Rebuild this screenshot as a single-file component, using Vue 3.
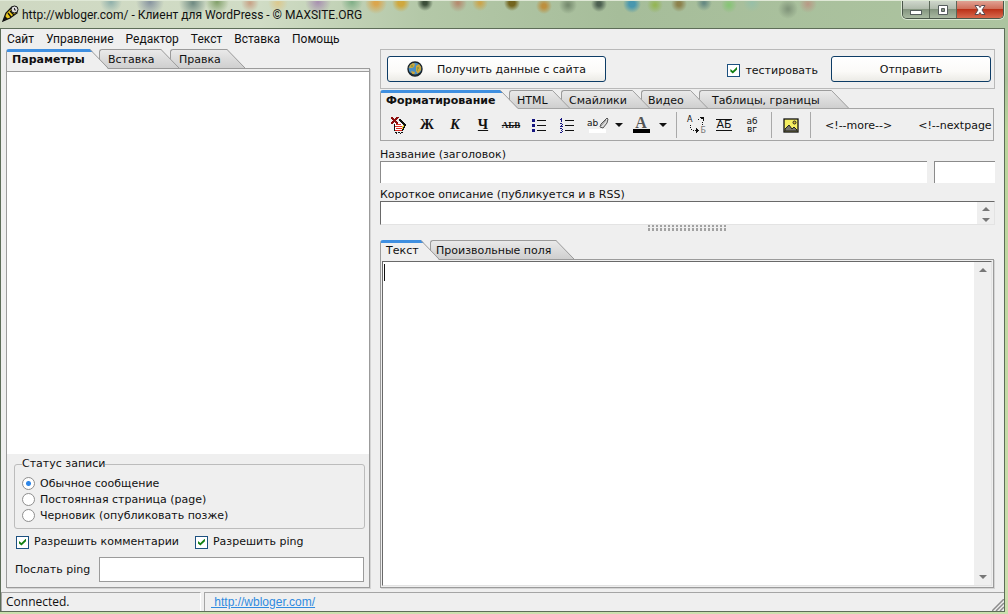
<script setup>
import { ref } from 'vue'

const menu = ['Сайт', 'Управление', 'Редактор', 'Текст', 'Вставка', 'Помощь']

const tabGroups = {
  left: [
    { label: 'Параметры', width: 102, bold: true },
    { label: 'Вставка', width: 80, pad: 9 },
    { label: 'Правка', width: 75, pad: 9 },
  ],
  format: [
    { label: 'Форматирование', width: 138, bold: true },
    { label: 'HTML', width: 61, pad: 8 },
    { label: 'Смайлики', width: 89, pad: 8 },
    { label: 'Видео', width: 67, pad: 7 },
    { label: 'Таблицы, границы', width: 150, pad: 13 },
  ],
  text: [
    { label: 'Текст', width: 59 },
    { label: 'Произвольные поля', width: 144, pad: 6 },
  ],
}

const tabStyle = (tab, i) => ({
  width: tab.width + 'px',
  paddingLeft: (tab.pad || 6) + 'px',
  zIndex: 10 - i,
})

const status = ref('post')
const statuses = [
  { value: 'post', label: 'Обычное сообщение' },
  { value: 'page', label: 'Постоянная страница (page)' },
  { value: 'draft', label: 'Черновик (опубликовать позже)' },
]
const allowComments = ref(true)
const allowPing = ref(true)
const testing = ref(true)
const pingUrl = ref('')
const title = ref('')
const slug = ref('')
const excerpt = ref('')
const body = ref('')
</script>

<template>
  <div class="window">
    <header class="titlebar">
      <svg class="app-icon" width="17" height="17" viewBox="0 0 17 17">
        <path d="M1 16 L4 8 L10 2 L15 8 L8 13 Z" fill="#e8c81c" stroke="#111" stroke-width="1.3" />
        <path d="M6 8 L9 12 M8 6 L12 10" stroke="#111" stroke-width="1.3" />
        <path d="M1 16 L3 11 L6 14 Z" fill="#111" />
        <circle cx="12.5" cy="4.5" r="3.5" fill="#ddd" stroke="#111" />
        <path d="M12.5 3v2h1.5" fill="none" stroke="#333" />
      </svg>
      <h1>http://wbloger.com/ - Клиент для WordPress - © MAXSITE.ORG</h1>
      <div class="window-buttons">
        <button type="button" class="min" aria-label="Свернуть">
          <svg width="14" height="14" viewBox="0 0 14 14"><rect x="1.5" y="7.5" width="11" height="4" fill="#fff" stroke="#555d5d" /></svg>
        </button>
        <button type="button" class="max" aria-label="Развернуть">
          <svg width="14" height="14" viewBox="0 0 14 14"><path fill-rule="evenodd" d="M2.5 2.5h9v9h-9z M5.5 5.5v3h3v-3z" fill="#fff" stroke="#555d5d" /></svg>
        </button>
        <button type="button" class="close" aria-label="Закрыть">
          <svg width="14" height="14" viewBox="0 0 14 14"><path d="M2 2.5h3.500l1.500 2 1.500-2H12L9 7l3 4.500H8.500L7 9.500l-1.500 2H2L5 7z" fill="#fff" stroke="#5a4a50" /></svg>
        </button>
      </div>
    </header>

    <div class="client">
      <nav class="menu">
        <button v-for="item in menu" :key="item" type="button">{{ item }}</button>
      </nav>

      <main class="workspace">
        <aside class="sidebar">
          <div class="tabs" role="tablist">
            <button v-for="(tab, i) in tabGroups.left" :key="tab.label" type="button" role="tab" class="tab" :class="{ active: i === 0, bold: tab.bold }" :aria-selected="i === 0" :style="tabStyle(tab, i)">
              <svg class="slant" width="18" height="19" viewBox="0 0 18 19"><path d="M0 0.500 L18 19" /></svg>
              <span>{{ tab.label }}</span>
            </button>
          </div>
          <div class="side-panel">
            <div class="parameters"></div>
            <div class="options">
              <fieldset>
                <legend>Статус записи</legend>
                <label v-for="s in statuses" :key="s.value">
                  <input v-model="status" type="radio" name="status" :value="s.value" /><span>{{ s.label }}</span>
                </label>
              </fieldset>
              <div class="checks">
                <label><input v-model="allowComments" type="checkbox" />Разрешить комментарии</label>
                <label><input v-model="allowPing" type="checkbox" />Разрешить ping</label>
              </div>
              <div class="ping">
                <label for="ping">Послать ping</label>
                <input id="ping" v-model="pingUrl" type="text" />
              </div>
            </div>
          </div>
        </aside>

        <section class="editor">
          <div class="actions">
            <button type="button" class="push fetch">
              <svg width="16" height="16" viewBox="0 0 16 16">
                <circle cx="8" cy="8" r="7" fill="#4b8fc4" stroke="#1a2126" stroke-width="1.4" />
                <path d="M3 4 L6 2 L8 3 L7 6 L5 7 L2 7z M9 5 L12 3 L14 6 L14 9 L11 13 L9 10z M4 10 L8 11 L7 14 L5 13z" fill="#cfa73a" />
                <path d="M3 12 A6.500 6.500 0 0 0 13 12" fill="none" stroke="#1d2c33" stroke-width="1.5" />
                <path d="M4 5h2M10 7h2M10 9h1" stroke="#5c8b3c" />
              </svg>
              <span>Получить данные с сайта</span>
            </button>
            <label class="testing"><input v-model="testing" type="checkbox" /><span>тестировать</span></label>
            <button type="button" class="push send">Отправить</button>
          </div>

          <div class="tabs format-tabs" role="tablist">
            <button v-for="(tab, i) in tabGroups.format" :key="tab.label" type="button" role="tab" class="tab" :class="{ active: i === 0, bold: tab.bold }" :aria-selected="i === 0" :style="tabStyle(tab, i)">
              <svg class="slant" width="18" height="19" viewBox="0 0 18 19"><path d="M0 0.500 L18 19" /></svg>
              <span>{{ tab.label }}</span>
            </button>
          </div>
          <div class="toolbar" role="toolbar">
            <button type="button" class="tool" aria-label="Очистить">
              <svg width="18" height="18" viewBox="0 0 18 18" shape-rendering="crispEdges">
                <path d="M5 7h7v2h2v3h-1v3H5z" fill="#fff" />
                <path d="M9 3h2v1h1v1h1v1h1v1h1v1h1v2h-1v2h-1v2h-1v1h-1v-2h1v-2h1V9h-1V8h-1V7h-1V6h-1V5H9z" fill="#111" />
                <path d="M13 9h1v2h-1v2h-1v-3h1z" fill="#ead43a" />
                <path d="M6 8h5v1H6zM5 10h7v1H5zM6 12h6v1H6zM5 14h7v1H5z" fill="#dc2c22" />
                <path d="M4 8h1v7H4zM5 16h2v1H5zM8 16h2v1H8zM11 16h2v1h-2zM6 17h1v1H6zM10 17h1v1h-1z" fill="#111" />
                <path d="M1 1h2v1h1v1h1V2h1V1h3v1H8v1H7v1H6v1h1v1h1v2H6V7H5V6H4v1H3v1H1V6h1V5h1V4H2V3H1z" fill="#8e1010" />
              </svg>
            </button>
            <button type="button" class="tool serif">Ж</button>
            <button type="button" class="tool serif italic">К</button>
            <button type="button" class="tool serif under">Ч</button>
            <button type="button" class="tool serif strike">АБВ</button>
            <button type="button" class="tool" aria-label="Маркированный список">
              <svg width="16" height="16" viewBox="0 0 16 16" shape-rendering="crispEdges">
                <path d="M1 2h3v3H1zM1 7h3v3H1zM1 12h3v3H1z" fill="#15157f" /><path d="M6 3h9v1H6zM6 8h9v1H6zM6 13h9v1H6z" fill="#111" />
              </svg>
            </button>
            <button type="button" class="tool" aria-label="Нумерованный список">
              <svg width="16" height="16" viewBox="0 0 16 16" shape-rendering="crispEdges">
                <path d="M2 1h1v4H2zM1 2h1v1H1zM1 6h2v1H1zM3 7h1v1H3zM2 8h1v1H2zM1 9h3v1H1zM1 11h2v1H1zM3 12h1v1H3zM2 13h1v1H2zM3 14h1v1H3zM1 15h2v1H1z" fill="#15157f" /><path d="M6 3h9v1H6zM6 8h9v1H6zM6 13h9v1H6z" fill="#111" />
              </svg>
            </button>
            <button type="button" class="tool highlight" aria-label="Цвет фона">
              <span>ab</span>
              <svg width="10" height="12" viewBox="0 0 10 12"><path d="M8 1l1 1-1 4-4 5-3-1 1-3z" fill="#ddd" stroke="#555" /><path d="M1 10l6-7" stroke="#888" /></svg>
              <i></i>
            </button>
            <button type="button" class="drop" aria-label="Выбрать цвет фона"></button>
            <button type="button" class="tool color"><span>A</span></button>
            <button type="button" class="drop" aria-label="Выбрать цвет текста"></button>
            <span class="separator"></span>
            <button type="button" class="tool swap" aria-label="Заменить">
              <svg width="18" height="18" viewBox="0 0 18 18" shape-rendering="crispEdges">
                <path d="M3 9h1v1H3zM3 11h1v1H3zM4 13h1v1H4zM6 14h1v1H6zM8 14h1v1H8zM9 12h1v5H9zM10 13h1v3h-1zM11 14h1v1h-1zM11 3h1v1h-1zM13 1h4v1h-4zM14 2h3v1h-3zM16 3h1v2h-1zM15 6h1v1h-1zM15 8h1v1h-1z" fill="#111" />
              </svg>
              <b>А</b><em>Б</em>
            </button>
            <button type="button" class="tool lines">АБ</button>
            <button type="button" class="tool stack">аб<br />вг</button>
            <span class="separator"></span>
            <button type="button" class="tool" aria-label="Изображение">
              <svg width="16" height="16" viewBox="0 0 16 16">
                <rect x="1" y="2" width="14" height="13" fill="#f5ef62" stroke="#111" stroke-width="1.3" />
                <circle cx="11.5" cy="5.5" r="1.5" fill="#d6b72a" stroke="#222" />
                <path d="M2 14v-2l4-4 3 4 2-2 3 3v1z" fill="#77756b" stroke="#222" />
              </svg>
            </button>
            <span class="separator"></span>
            <button type="button" class="tag">&lt;!--more--&gt;</button>
            <button type="button" class="tag">&lt;!--nextpage</button>
          </div>

          <label class="caption first" for="post-title">Название (заголовок)</label>
          <div class="title-row">
            <input id="post-title" v-model="title" type="text" class="sunken" />
            <input v-model="slug" type="text" class="sunken slug" aria-label="Ярлык" />
          </div>
          <label class="caption" for="excerpt">Короткое описание (публикуется и в RSS)</label>
          <div class="area excerpt">
            <textarea id="excerpt" v-model="excerpt"></textarea>
            <div class="scroll"><i class="up"></i><i class="down"></i></div>
          </div>
          <div class="grip"></div>

          <div class="tabs" role="tablist">
            <button v-for="(tab, i) in tabGroups.text" :key="tab.label" type="button" role="tab" class="tab" :class="{ active: i === 0 }" :aria-selected="i === 0" :style="tabStyle(tab, i)">
              <svg class="slant" width="18" height="19" viewBox="0 0 18 19"><path d="M0 0.500 L18 19" /></svg>
              <span>{{ tab.label }}</span>
            </button>
          </div>
          <div class="text-panel">
            <div class="area">
              <textarea v-model="body" aria-label="Текст записи"></textarea>
              <span class="caret"></span>
              <div class="scroll"><i class="up"></i><i class="down"></i></div>
            </div>
          </div>
        </section>
      </main>

      <footer class="statusbar">
        <div class="state">Connected.</div>
        <div class="site"><a href="http://wbloger.com/">&nbsp;http://wbloger.com/</a></div>
        <svg class="resize" width="12" height="12" viewBox="0 0 12 12"><path d="M0 12L12 0M4 12l8-8M8 12l4-4" stroke="#8d8d8d" stroke-width="1.5" /></svg>
      </footer>
    </div>
  </div>
</template>

<style>
body {
  margin: 0;
}
</style>

<style scoped>
* {
  box-sizing: border-box;
}
.window {
  display: flex;
  flex-direction: column;
  min-height: 100vh;
  padding: 0 3px 2px 0;
  background: linear-gradient(#b5c6a8 0, #a9c39a 80px, #b9d59b 130px, #cbe0ae 100%);
  font: 11px/16px "DejaVu Sans", sans-serif;
  color: #111;
}
button,
input,
textarea {
  font: inherit;
  color: inherit;
  margin: 0;
  padding: 0;
}
button {
  border: 0;
  background: none;
}
.titlebar {
  display: flex;
  align-items: center;
  height: 28px;
  margin-right: -3px;
  padding: 0 4px 0 2px;
  border-top: 1px solid #dfe8d6;
  background:
    radial-gradient(circle at 111px 1px, #8fb0ab 0, transparent 11px),
    radial-gradient(circle at 150px 1px, #8794a0 0, transparent 14px),
    radial-gradient(circle at 193px 2px, #6f8a82 0, transparent 14px),
    radial-gradient(circle at 217px 1px, #82a06a 0, transparent 12px),
    radial-gradient(circle at 250px 2px, #c8a084 0, transparent 9px),
    radial-gradient(circle at 278px 2px, #dcc88c 0, transparent 10px),
    radial-gradient(circle at 318px 1px, #a78fb0 0, transparent 13px),
    radial-gradient(circle at 352px 1px, #7fae86 0, transparent 11px),
    radial-gradient(circle at 376px 2px, #dba64e 2px, transparent 11px),
    radial-gradient(circle at 401px 2px, #cfa83e 3px, transparent 9px),
    radial-gradient(circle at 425px 2px, #3d4f3a 2px, transparent 8px),
    radial-gradient(circle at 458px 2px, #b58c70 1px, transparent 9px),
    radial-gradient(circle at 480px 2px, #cba54c 1px, transparent 8px),
    radial-gradient(circle at 512px 2px, #73651f 3px, transparent 8px),
    radial-gradient(circle at 544px 5px, #bd8f3e 2px, transparent 8px),
    radial-gradient(circle at 568px 4px, #788c70 1px, transparent 9px),
    radial-gradient(circle at 599px 3px, #4d6051 2px, transparent 8px),
    radial-gradient(circle at 632px 3px, #4997ae 3px, transparent 9px),
    radial-gradient(circle at 655px 4px, #95b657 1px, transparent 8px),
    radial-gradient(circle at 679px 3px, #8d824d 2px, transparent 8px),
    radial-gradient(circle at 704px 2px, #688b83 1px, transparent 8px),
    radial-gradient(circle at 729px 4px, #88c477 1px, transparent 8px),
    radial-gradient(circle at 752px 2px, #97bfa8 0, transparent 9px),
    radial-gradient(circle at 788px 8px, #83977c 1px, transparent 10px),
    radial-gradient(circle at 808px 3px, #b99884 0, transparent 9px),
    linear-gradient(90deg, #cfd8c2 0, #d0dcc5 260px, #b4c8a8 420px, #a6bd9a 620px, #adc4a0 100%);
}
.app-icon {
  flex: none;
  margin-top: -2px;
}
h1 {
  flex: 1;
  margin: 0 0 0 3px;
  font: 12px/16px Roboto, "Noto Sans", sans-serif;
}
.window-buttons {
  display: flex;
  align-self: flex-start;
  height: 18px;
  border: 1px solid #4a574a;
  border-top: 0;
  border-radius: 0 0 5px 5px;
  overflow: hidden;
  box-shadow: 0 0 0 1px #dce8d4;
}
.window-buttons button {
  display: grid;
  place-items: center;
  width: 27px;
  border-right: 1px solid #5b6859;
  background: linear-gradient(#ced6cb 0, #b1bcad 45%, #84957f 50%, #a9b9a1 100%);
}
.window-buttons .close {
  width: 46px;
  border-right: 0;
  background: linear-gradient(#e0a193 0, #d0705b 45%, #bb3219 50%, #d8694e 100%);
}
.client {
  display: flex;
  flex: 1;
  flex-direction: column;
  border: 1px solid #5d6d58;
  background: #efefef;
}
.menu {
  display: flex;
  gap: 12px;
  height: 20px;
  padding-left: 6px;
}
.menu button {
  font: 12px/20px Roboto, "Noto Sans", sans-serif;
}
.workspace {
  display: flex;
  flex: 1;
  gap: 10px;
  padding: 0 9px 4px 5px;
}
.sidebar {
  display: flex;
  flex: 0 0 364px;
  flex-direction: column;
}
.editor {
  display: flex;
  flex: 1;
  flex-direction: column;
  min-width: 0;
}
.tabs {
  position: relative;
  z-index: 1;
  display: flex;
  height: 19px;
}
.tab {
  position: relative;
  flex: none;
  margin-right: -9px;
  text-align: left;
  white-space: nowrap;
  line-height: 20px;
}
.tab::before {
  content: "";
  position: absolute;
  inset: 0;
  border: 1px solid #9b9b9b;
  border-width: 1px 0 0 1px;
  border-radius: 3px 0 0 0;
  background: linear-gradient(#e9e9e9, #cfcfcf);
  clip-path: polygon(0 0, calc(100% - 18px) 0, 100% 100%, 0 100%);
}
.slant {
  position: absolute;
  top: 0;
  right: 0;
  height: 100%;
}
.slant path {
  stroke: #9b9b9b;
}
.tab span {
  position: relative;
  top: 1px;
}
.tab.bold {
  font-weight: bold;
}
.tab.active::before {
  bottom: -1px;
  border-top: 3px solid #3f8fe0;
  background: #efefef;
}
.side-panel {
  display: flex;
  flex: 1;
  flex-direction: column;
  border: 1px solid #9b9b9b;
  box-shadow: 1px 1px 0 #d4d4d4;
}
.parameters {
  flex: 1;
  margin-top: 2px;
  border-top: 1px solid #9b9b9b;
  background: #fff;
}
.options {
  padding: 3px 4px 5px 7px;
}
fieldset {
  display: flex;
  flex-direction: column;
  margin: 0;
  padding: 4px 7px 5px;
  border: 1px solid #bcbcbc;
  border-radius: 3px;
}
legend {
  height: 14px;
  padding: 0;
  line-height: 14px;
}
label {
  white-space: nowrap;
}
fieldset label,
.checks label,
.testing {
  display: flex;
  align-items: center;
  gap: 5px;
  height: 16px;
}
fieldset label span,
.testing span {
  padding-top: 2px;
}
input[type="radio"] {
  appearance: none;
  width: 13px;
  height: 13px;
  border: 1px solid #8e8e8e;
  border-radius: 50%;
  background: #fff;
}
input[type="radio"]:checked {
  background: radial-gradient(circle, #2d86e8 0, #2d86e8 2px, #fff 3px);
}
input[type="checkbox"] {
  appearance: none;
  display: grid;
  place-items: center;
  width: 13px;
  height: 13px;
  border: 1px solid #1c5180;
  background: #fff;
}
input[type="checkbox"]:checked::after {
  content: "";
  width: 7px;
  height: 7px;
  background: #128012;
  clip-path: polygon(0 35%, 35% 65%, 100% 0, 100% 38%, 35% 100%, 0 70%);
}
.checks {
  display: flex;
  gap: 16px;
  margin: 5px 0 7px 2px;
}
.ping {
  display: flex;
  align-items: center;
  gap: 9px;
  margin: 0 1px;
}
.ping input {
  flex: 1;
  height: 25px;
  border: 1px solid #9b9b9b;
  background: #fff;
}
.actions {
  display: flex;
  align-items: center;
  height: 40px;
  padding: 0 3px 0 6px;
  border: 1px solid #b9b9b9;
}
.push {
  height: 26px;
  padding-top: 2px;
  border: 1px solid #0d3c66;
  border-radius: 3px;
  background: linear-gradient(#fff, #fbfaf8 60%, #ecebe6);
}
.fetch {
  display: flex;
  align-items: center;
  gap: 14px;
  width: 219px;
  padding: 0 0 0 19px;
}
.fetch span {
  padding-top: 2px;
}
.testing {
  margin: 2px 13px 0 auto;
}
.send {
  width: 160px;
}
.format-tabs {
  height: 18px;
  margin-top: 1px;
}
.toolbar {
  display: flex;
  align-items: center;
  height: 33px;
  margin-right: 1px;
  padding-left: 4px;
  border: 1px solid #a5a5a5;
  overflow: hidden;
}
.tool {
  position: relative;
  display: grid;
  flex: none;
  place-items: center;
  width: 28px;
  height: 28px;
}
.serif {
  font: bold 14px/16px "Liberation Serif", serif;
}
.italic {
  font-style: italic;
}
.under {
  text-decoration: underline;
}
.strike {
  font-size: 9px;
  text-decoration: line-through;
}
.highlight {
  grid-template: 12px 4px / 13px 9px;
  place-content: center;
  margin-left: 2px;
  font-size: 9px;
  line-height: 10px;
}
.highlight i {
  grid-column: 1 / 3;
  width: 17px;
  height: 4px;
  background: #fff;
}
.drop {
  flex: none;
  width: 16px;
  height: 28px;
}
.drop::before {
  content: "";
  display: block;
  width: 0;
  margin: 0 auto;
  border: 4px solid transparent;
  border-top-color: #111;
  border-bottom: 0;
}
.color span {
  width: 17px;
  height: 17px;
  border-bottom: 4px solid #000;
  font: bold 16px/13px "Liberation Serif", serif;
  color: #555;
}
.separator {
  flex: none;
  width: 1px;
  height: 26px;
  margin: 0 5px;
  background: #a9a9a9;
}
.swap b,
.swap em {
  position: absolute;
  font: 8px/8px "DejaVu Sans", sans-serif;
}
.swap b {
  top: 5px;
  left: 5px;
}
.swap em {
  right: 4px;
  bottom: 4px;
  color: #777;
}
.lines::before,
.lines::after {
  content: "";
  width: 16px;
  height: 1px;
  background: #111;
}
.lines {
  place-content: center;
  font-size: 11px;
  line-height: 10px;
}
.stack {
  font-size: 9px;
  line-height: 8px;
}
.tag {
  flex: none;
  margin-left: 9px;
  padding-top: 2px;
}
.tag + .tag {
  margin-left: 26px;
}
.caption {
  height: 14px;
  margin-top: 4px;
  line-height: 16px;
}
.caption.first {
  margin-top: 6px;
}
.title-row {
  display: flex;
  gap: 7px;
}
.sunken {
  flex: 1;
  min-width: 0;
  height: 22px;
  border: solid #8b8b8b;
  border-width: 1px 0 0 1px;
  outline: 0;
  background: #fff;
}
.slug {
  flex: 0 0 61px;
}
.area {
  position: relative;
  display: flex;
  flex: 1;
  border: 1px solid #696969;
  border-right-color: #e3e3e3;
  border-bottom-color: #e3e3e3;
  background: #fff;
}
.area textarea {
  flex: 1;
  min-width: 0;
  height: auto;
  border: 0;
  outline: 0;
  background: #fff;
  resize: none;
  overflow: hidden;
}
.excerpt {
  flex: none;
  height: 24px;
}
.scroll {
  display: flex;
  flex-direction: column;
  align-items: center;
  justify-content: space-between;
  width: 17px;
  padding: 6px 0;
  background: #efefef;
}
.excerpt .scroll {
  padding: 5px 0 2px;
}
.scroll i {
  border: 4px solid transparent;
}
.scroll .up {
  border-top-width: 0;
  border-bottom-color: #777;
}
.scroll .down {
  border-bottom-width: 0;
  border-top-color: #777;
}
.grip {
  width: 80px;
  height: 6px;
  margin: 0 auto 9px;
  background:
    linear-gradient(#efefef, #efefef) 0 2px / 100% 1px no-repeat,
    repeating-linear-gradient(90deg, #a2a2a2 0, #a2a2a2 2px, #efefef 2px, #efefef 4px);
}
.text-panel {
  display: flex;
  flex: 1;
  margin-right: 1px;
  padding: 1px;
  border: 1px solid #9b9b9b;
  box-shadow: 1px 1px 0 #d4d4d4;
}
.caret {
  position: absolute;
  top: 2px;
  left: 1px;
  width: 1px;
  height: 17px;
  background: #111;
}
.statusbar {
  position: relative;
  display: flex;
  gap: 3px;
  height: 19px;
  font: 12px/17px "Open Sans", "Noto Sans", sans-serif;
}
.state,
.site {
  border: solid #a5a5a5;
  border-width: 1px 0 0 1px;
}
.state {
  width: 200px;
  padding-left: 4px;
  border-right: 1px solid #fff;
}
.site {
  flex: 1;
  padding-left: 6px;
}
.site a {
  font: 12px/14px "Liberation Sans", Arial, sans-serif;
  color: #2f8be0;
}
.resize {
  position: absolute;
  right: 0;
  bottom: 0;
}
</style>
